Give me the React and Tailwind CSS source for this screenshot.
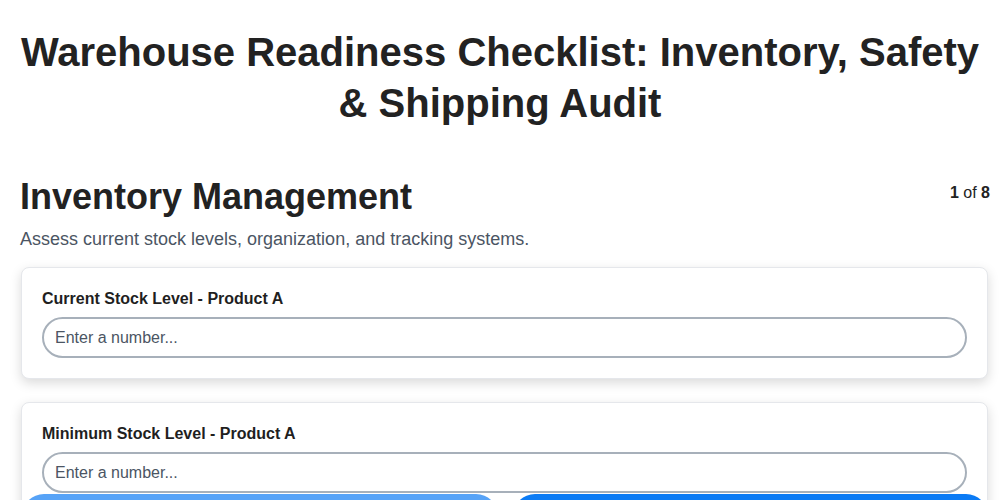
export default function App() {
  const Card = ({ label }) => (
    <div className="bg-white rounded-lg border border-gray-200 shadow-[0_4px_12px_rgba(0,0,0,0.15)] px-[20px] pt-[21px] pb-[20px]">
      <div className="text-[16px] font-bold text-[#1f1f1f] leading-[20px] mb-[8px]">{label}</div>
      <div className="h-[41px] rounded-full border-2 border-[#a7b0ba] flex items-center px-[11px] text-[16px] text-[#4b5563]">Enter a number...</div>
    </div>
  );
  return (
    <div className="w-[1000px] h-[500px] overflow-hidden bg-white relative" style={{ fontFamily: '"Liberation Sans", Arial, sans-serif' }}>
      <h1 className="text-[40px] font-bold text-[#222] leading-[51px] text-center pt-[27px] px-2">Warehouse Readiness Checklist: Inventory, Safety &amp; Shipping Audit</h1>
      <div className="px-[20px] mt-[46px]">
        <div className="flex justify-between items-start">
          <h2 className="text-[36px] font-bold text-[#222] leading-[44px]">Inventory Management</h2>
          <div className="text-[16px] text-[#222] mt-[6px] -mr-[10px]"><b>1</b> of <b>8</b></div>
        </div>
        <p className="text-[18px] text-[#4b5563] mt-[7px]">Assess current stock levels, organization, and tracking systems.</p>
        <div className="mt-[14px] flex flex-col gap-[23px] ml-[1px] -mr-[8px]">
          <Card label="Current Stock Level - Product A" />
          <Card label="Minimum Stock Level - Product A" />
        </div>
      </div>
      <div className="absolute left-[22px] right-[12px] top-[494px] flex gap-[15px]">
        <div className="flex-1 h-11 rounded-full bg-[#57a3f7]" />
        <div className="flex-1 h-11 rounded-full bg-[#0b7bf5]" />
      </div>
    </div>
  );
}
